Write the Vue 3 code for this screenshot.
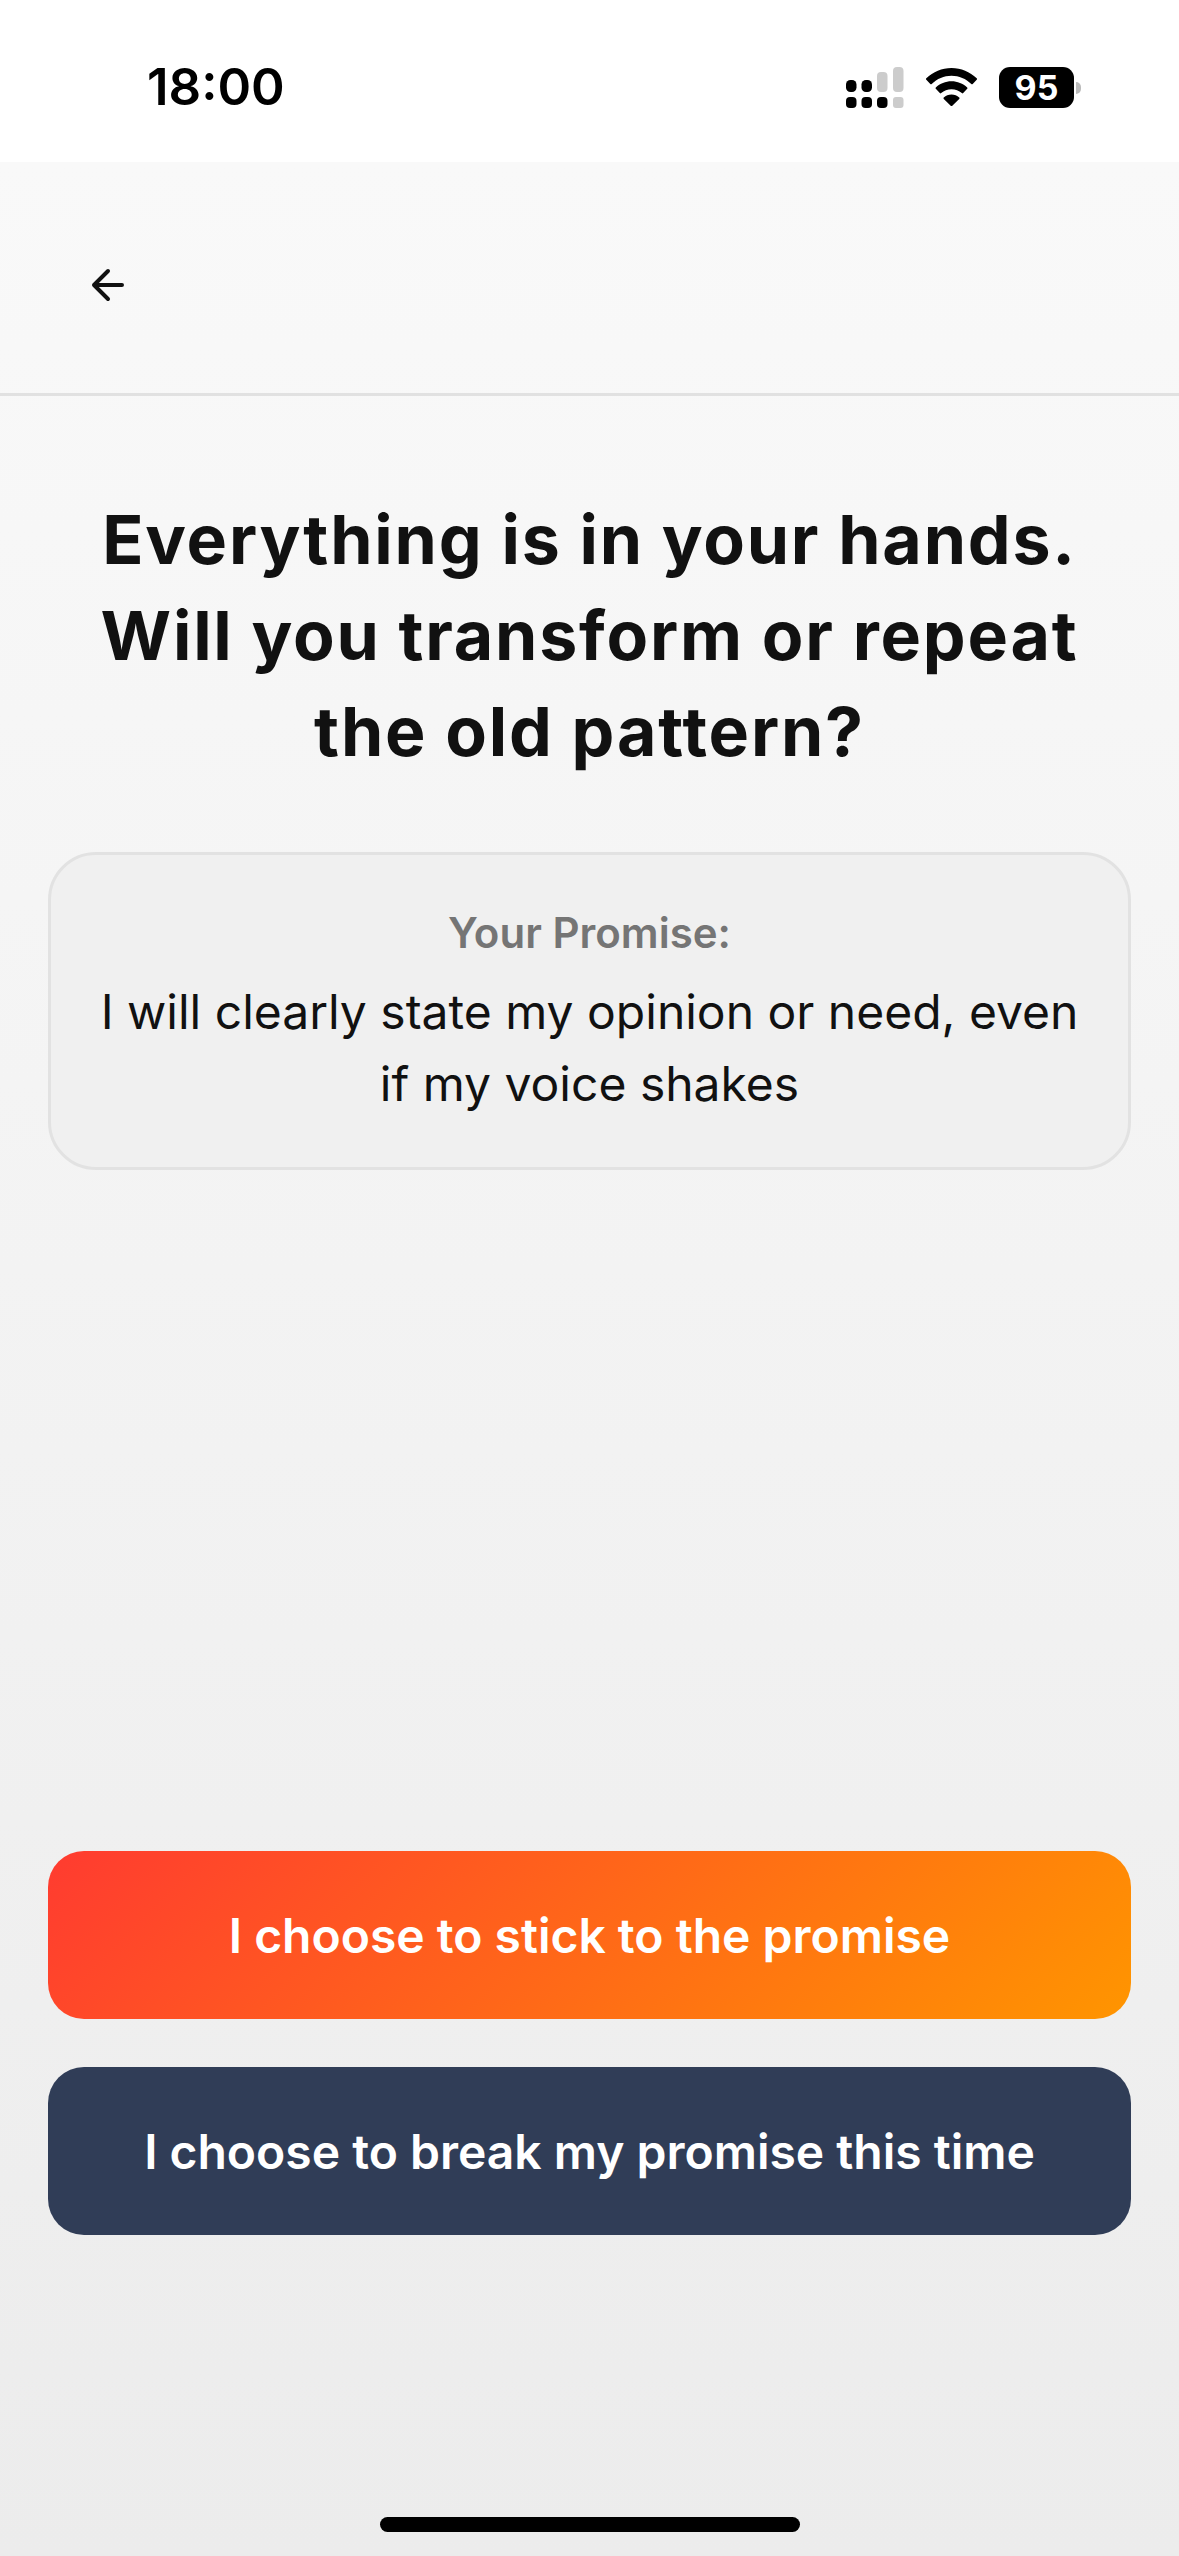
<script setup>
const title = ['Everything is in your hands.', 'Will you transform or repeat', 'the old pattern?']
</script>

<template>
  <div class="screen">
    <header class="status">
      <span class="time">18:00</span>
      <div class="status-icons">
        <svg class="signal" width="58" height="41" viewBox="0 0 58 41">
          <rect x="0" y="13" width="10.500" height="12" rx="4.500" fill="#000" />
          <rect x="15.500" y="13" width="10.500" height="12" rx="4.500" fill="#000" />
          <rect x="31" y="5" width="10.500" height="20" rx="4" fill="#ccc" />
          <rect x="47" y="0" width="10.500" height="25" rx="4" fill="#ccc" />
          <rect x="0" y="30" width="10.500" height="11" rx="4" fill="#000" />
          <rect x="15.500" y="30" width="10.500" height="11" rx="4" fill="#000" />
          <rect x="31" y="30" width="10.500" height="11" rx="4" fill="#000" />
          <rect x="47" y="30" width="10.500" height="11" rx="3" fill="#ccc" />
        </svg>
        <svg class="wifi" width="51" height="38" viewBox="0 0 51 38">
          <path d="M25.500 0C15.800 0 7.200 3.700 .3 10.300a1 1 0 0 0 0 1.400l4 4.200a1 1 0 0 0 1.400 0C11 10.800 18 7.700 25.500 7.700s14.500 3.100 19.800 8.200a1 1 0 0 0 1.400 0l4-4.200a1 1 0 0 0 0-1.400C43.800 3.700 35.200 0 25.500 0Z" fill="#000" />
          <path d="M25.500 13.200c-6 0-11.500 2.300-15.700 6.200a1 1 0 0 0 0 1.400l4 4.200a1 1 0 0 0 1.400.1c2.800-2.400 6.400-3.800 10.300-3.800s7.500 1.400 10.300 3.800a1 1 0 0 0 1.400-.1l4-4.200a1 1 0 0 0 0-1.400c-4.200-3.900-9.700-6.200-15.700-6.200Z" fill="#000" />
          <path d="M25.500 26.500c-3 0-5.700 1.100-7.700 3a1 1 0 0 0 0 1.400l6.900 6.800a1.100 1.100 0 0 0 1.600 0l6.900-6.800a1 1 0 0 0 0-1.400c-2-1.900-4.700-3-7.700-3Z" fill="#000" />
        </svg>
        <div class="battery">
          <span class="battery-body">95</span>
          <span class="battery-cap"></span>
        </div>
      </div>
    </header>

    <div class="page">
      <nav class="nav">
        <svg width="38" height="38" viewBox="0 0 38 38" fill="none" stroke="#111" stroke-width="4" stroke-linecap="round" stroke-linejoin="round">
          <path d="M33 19H5M19 5 5 19l14 14" />
        </svg>
      </nav>

      <main class="content">
        <h1 class="title">
          <span v-for="line in title" :key="line" class="title-line">{{ line }}</span>
        </h1>

        <section class="promise">
          <p class="promise-label">Your Promise:</p>
          <p class="promise-text">I will clearly state my opinion or need, even if my voice shakes</p>
        </section>

        <div class="actions">
          <button class="btn btn-keep" type="button">I choose to stick to the promise</button>
          <button class="btn btn-break" type="button">I choose to break my promise this time</button>
        </div>
      </main>

      <div class="home-bar"></div>
    </div>
  </div>
</template>

<style>
html, body { margin: 0; background: #fff; }
</style>

<style scoped>
.screen {
  width: 1179px;
  height: 2556px;
  display: flex;
  flex-direction: column;
  overflow: hidden;
  font-family: Inter, "Noto Sans", sans-serif;
  color: #111;
  background: #fff;
}
.status {
  height: 162px;
  flex: none;
  box-sizing: border-box;
  display: flex;
  justify-content: space-between;
  align-items: flex-start;
  padding: 0 98px 0 147px;
  background: #fff;
}
.time {
  margin-top: 55px;
  font-size: 51px;
  line-height: 64px;
  font-weight: 600;
  color: #000;
}
.status-icons {
  margin-top: 67px;
  display: flex;
  align-items: flex-start;
  gap: 22px;
}
.wifi { margin-top: 1px; }
.battery { display: flex; align-items: center; gap: 2px; }
.battery-body {
  width: 75px;
  height: 41px;
  border-radius: 11px;
  background: #000;
  color: #fff;
  font-size: 34px;
  font-weight: 700;
  line-height: 41px;
  text-align: center;
}
.battery-cap {
  width: 5px;
  height: 12px;
  border-radius: 0 6px 6px 0;
  background: #bbb;
}
.page {
  flex: 1;
  position: relative;
  display: flex;
  flex-direction: column;
  background: linear-gradient(180deg, #f9f9f9, #ececec);
}
.nav {
  flex: none;
  height: 234px;
  box-sizing: border-box;
  border-bottom: 3px solid #e1e1e1;
  padding: 104px 0 0 89px;
}
.nav svg { display: block; }
.content {
  flex: 1;
  display: flex;
  flex-direction: column;
  box-sizing: border-box;
  padding: 0 48px;
}
.title {
  margin: 95px 0 0;
  font-size: 68px;
  line-height: 96px;
  letter-spacing: 1.8px;
  font-weight: 700;
  text-align: center;
  color: #111;
}
.title-line { display: block; white-space: nowrap; }
.promise {
  margin-top: 73px;
  height: 318px;
  box-sizing: border-box;
  border: 3px solid #e2e2e2;
  border-radius: 48px;
  background: #f0f0f0;
  padding: 51px 36px 0;
  text-align: center;
}
.promise-label {
  margin: 0;
  font-size: 42px;
  line-height: 54px;
  font-weight: 600;
  color: #757575;
}
.promise-text {
  margin: 16px 0 0;
  font-size: 48px;
  line-height: 72px;
  color: #111;
}
.actions {
  margin-top: 681px;
  display: flex;
  flex-direction: column;
  gap: 48px;
}
.btn {
  height: 168px;
  border: 0;
  border-radius: 36px;
  color: #fff;
  font-family: inherit;
  font-size: 48px;
  font-weight: 600;
  text-align: center;
  padding: 0;
}
.btn-keep { background: linear-gradient(135deg, #ff3b30, #ff9500); }
.btn-break { background: #303d57; }
.home-bar {
  position: absolute;
  left: 380px;
  bottom: 24px;
  width: 420px;
  height: 15px;
  border-radius: 8px;
  background: #000;
}
</style>
